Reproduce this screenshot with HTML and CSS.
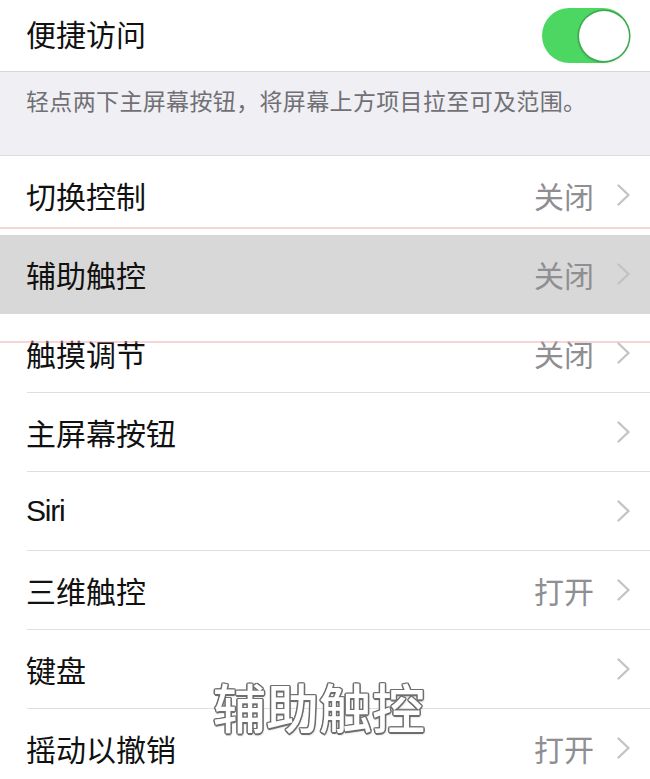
FILE: index.html
```html
<!DOCTYPE html>
<html lang="zh-CN">
<head>
<meta charset="utf-8">
<title>辅助功能</title>
<link rel="stylesheet" href="styles.css">
</head>
<body>
<div class="screen">
  <div class="top-row">
    <span class="label">便捷访问</span>
    <span class="switch"><span class="knob"></span></span>
  </div>
  <div class="note">轻点两下主屏幕按钮，将屏幕上方项目拉至可及范围。</div>
  <div class="group">
    <div class="row no-sep"><span class="label">切换控制</span><span class="right"><span class="value">关闭</span><svg class="chev" viewBox="0 0 13 22" width="13" height="22"><polyline points="1.5,1.5 11.5,11 1.5,20.5"/></svg></span></div>
    <div class="row active"><span class="label">辅助触控</span><span class="right"><span class="value">关闭</span><svg class="chev faint" viewBox="0 0 13 22" width="13" height="22"><polyline points="1.5,1.5 11.5,11 1.5,20.5"/></svg></span></div>
    <div class="row"><span class="label">触摸调节</span><span class="right"><span class="value">关闭</span><svg class="chev" viewBox="0 0 13 22" width="13" height="22"><polyline points="1.5,1.5 11.5,11 1.5,20.5"/></svg></span></div>
    <div class="row"><span class="label">主屏幕按钮</span><span class="right"><svg class="chev" viewBox="0 0 13 22" width="13" height="22"><polyline points="1.5,1.5 11.5,11 1.5,20.5"/></svg></span></div>
    <div class="row"><span class="label latin">Siri</span><span class="right"><svg class="chev" viewBox="0 0 13 22" width="13" height="22"><polyline points="1.5,1.5 11.5,11 1.5,20.5"/></svg></span></div>
    <div class="row"><span class="label">三维触控</span><span class="right"><span class="value">打开</span><svg class="chev" viewBox="0 0 13 22" width="13" height="22"><polyline points="1.5,1.5 11.5,11 1.5,20.5"/></svg></span></div>
    <div class="row"><span class="label">键盘</span><span class="right"><svg class="chev" viewBox="0 0 13 22" width="13" height="22"><polyline points="1.5,1.5 11.5,11 1.5,20.5"/></svg></span></div>
    <div class="row"><span class="label">摇动以撤销</span><span class="right"><span class="value">打开</span><svg class="chev" viewBox="0 0 13 22" width="13" height="22"><polyline points="1.5,1.5 11.5,11 1.5,20.5"/></svg></span></div>
  </div>
  <div class="mark-box"></div>
  <div class="caption">辅助触控</div>
</div>
</body>
</html>
```
FILE: styles.css
```css
html, body {
  margin: 0;
  padding: 0;
  background: #ffffff;
}
body {
  font-family: "Noto Sans CJK SC", "Noto Sans", sans-serif;
  color: #111111;
}
.screen {
  position: relative;
  width: 650px;
  height: 779px;
  overflow: hidden;
  background: #ffffff;
}
.top-row {
  height: 72px;
  box-sizing: border-box;
  border-bottom: 1px solid #d6d6da;
  display: flex;
  align-items: center;
  justify-content: space-between;
  padding: 0 20px 0 26px;
}
.top-row .label {
  margin-bottom: 6px;
}
.label {
  font-size: 30px;
  line-height: 40px;
  color: #111111;
}
.label.latin {
  font-family: "Liberation Sans", "Noto Sans CJK SC", sans-serif;
  font-size: 30px;
  letter-spacing: -1.2px;
}
.switch {
  width: 88px;
  height: 55px;
  border-radius: 28px;
  background: #4cd662;
  display: flex;
  align-items: center;
  justify-content: flex-end;
  padding-right: 1px;
  box-sizing: border-box;
}
.knob {
  width: 50px;
  height: 50px;
  border-radius: 50%;
  background: #ffffff;
  box-shadow: 0 0 0 1.5px #3aa84c, 0 2px 3px rgba(0,0,0,0.15);
}
.note {
  height: 84px;
  box-sizing: border-box;
  background: #efeff4;
  border-bottom: 1px solid #dcdce0;
  padding: 12px 0 0 26px;
  font-size: 23px;
  letter-spacing: 0.35px;
  line-height: 32px;
  color: #707075;
}
.group {
  display: flex;
  flex-direction: column;
}
.row {
  position: relative;
  height: 79px;
  flex: none;
  display: flex;
  align-items: center;
  justify-content: space-between;
  padding: 0 20px 2px 26px;
  box-sizing: border-box;
  background: #ffffff;
}
.row::after {
  content: "";
  position: absolute;
  left: 27px;
  right: 0;
  bottom: 0;
  height: 1px;
  background: #dfdfe2;
}
.row.no-sep::after,
.row.active::after {
  display: none;
}
.row.active {
  background: #d8d8d8;
}
.right {
  display: flex;
  align-items: center;
  gap: 23px;
}
.value {
  font-size: 30px;
  line-height: 40px;
  color: #8e8e93;
}
.chev {
  display: block;
}
.chev polyline {
  fill: none;
  stroke: #c4c4c8;
  stroke-width: 2.4;
  stroke-linecap: round;
  stroke-linejoin: round;
}
.chev.faint polyline {
  stroke: #c2c2c2;
}
.mark-box {
  position: absolute;
  left: 0;
  right: 0;
  top: 227px;
  height: 112px;
  border-top: 2px solid rgba(238, 160, 165, 0.45);
  border-bottom: 2px solid rgba(238, 160, 165, 0.45);
  pointer-events: none;
}
.caption {
  position: absolute;
  left: 213px;
  top: 678px;
  font-size: 53px;
  line-height: 56px;
  font-weight: 500;
  color: #ffffff;
  text-shadow:
    1.5px 0 0 #6e6e6e, -1.5px 0 0 #6e6e6e,
    0 1.5px 0 #6e6e6e, 0 -1.5px 0 #6e6e6e,
    1px 1px 0 #6e6e6e, -1px -1px 0 #6e6e6e,
    1px -1px 0 #6e6e6e, -1px 1px 0 #6e6e6e,
    1px 2px 2px rgba(0,0,0,0.25);
}
```
